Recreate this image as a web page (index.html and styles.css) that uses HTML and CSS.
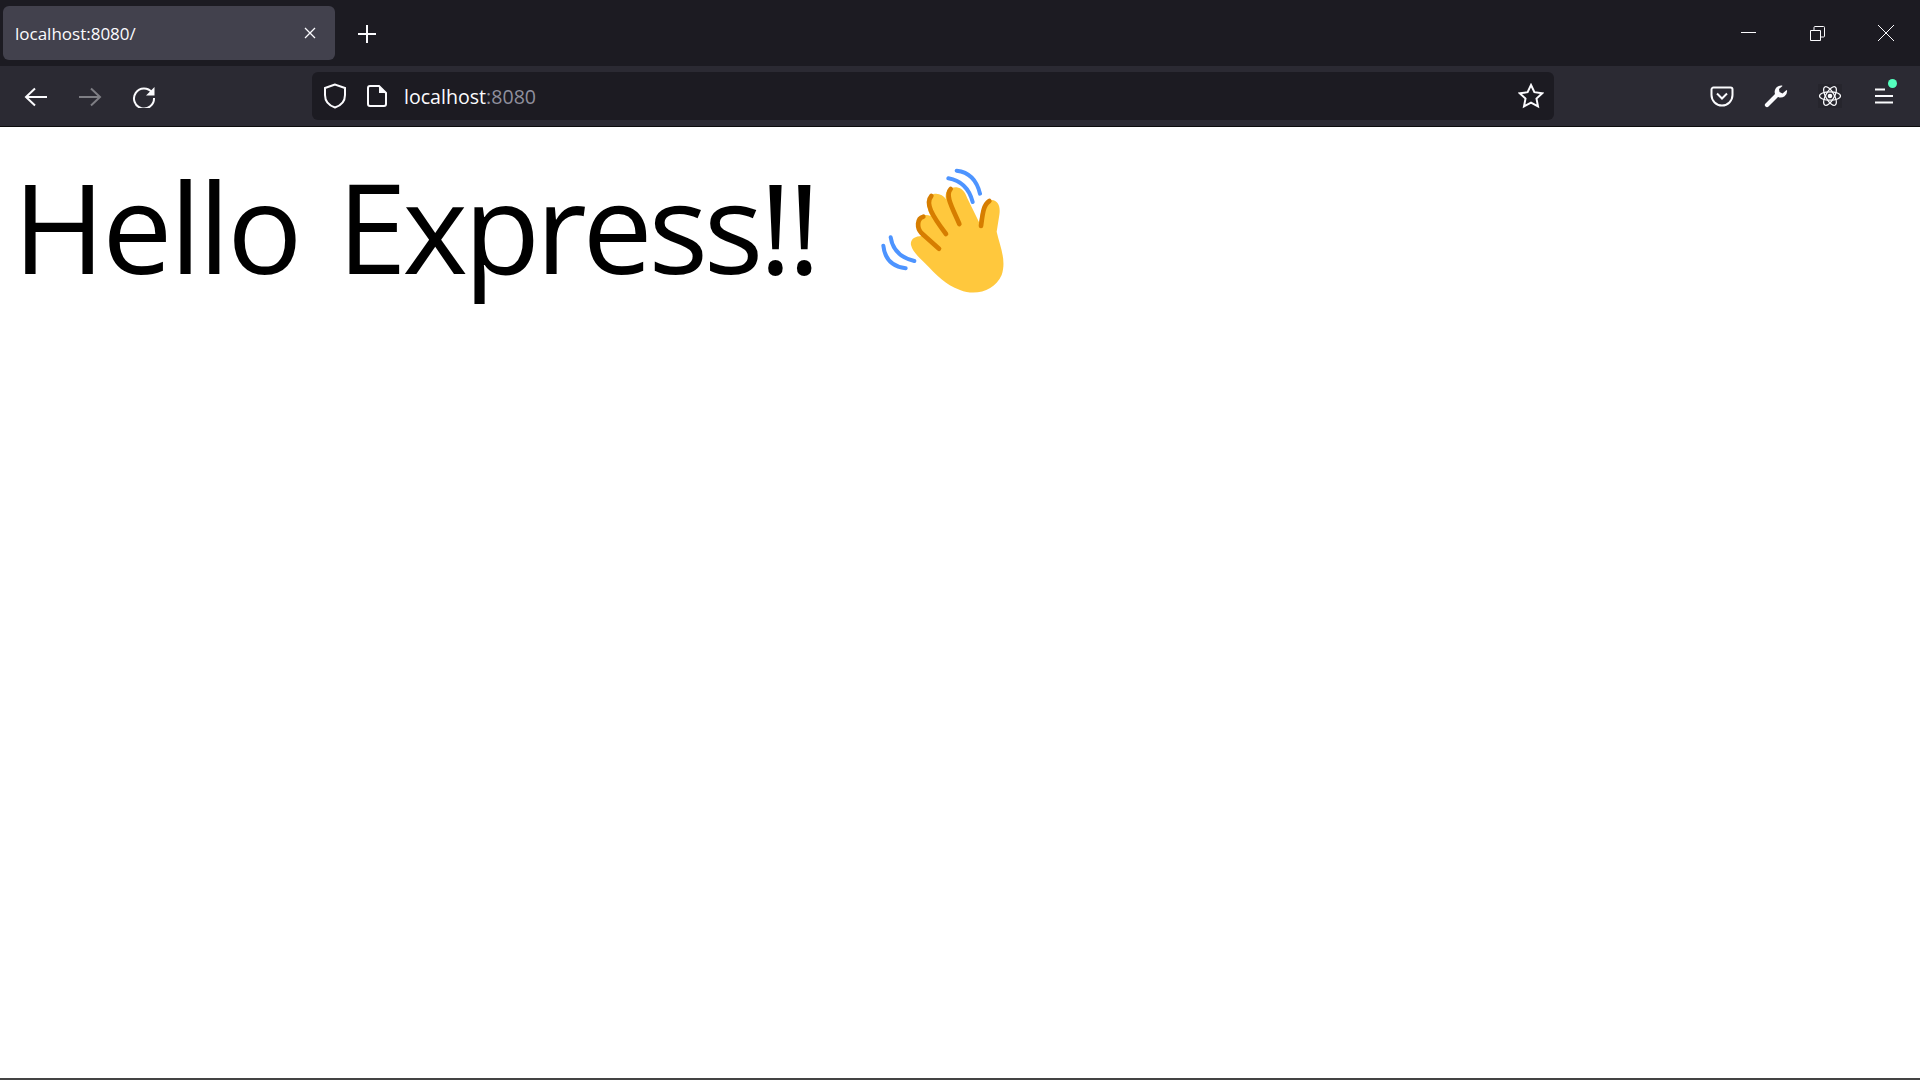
FILE: index.html
```html
<!DOCTYPE html>
<html lang="en">

<head>
  <meta charset="UTF-8" />
  <title>localhost:8080/</title>
  <link rel="stylesheet" href="styles.css">
</head>

<body>
  <div class="tabbar">
    <div class="tab">
      <span class="tab-title">localhost:8080/</span>
      <svg class="tab-close" width="12" height="12" viewBox="0 0 12 12"><path d="M1 1l10 10M11 1L1 11" /></svg>
    </div>
    <div class="newtab">
      <svg width="18" height="18" viewBox="0 0 18 18"><path d="M9 0v18M0 9h18" /></svg>
    </div>
    <div class="winctrls">
      <div class="winbtn">
        <svg width="15" height="15" viewBox="0 0 15 15"><path d="M0 6.500h15" /></svg>
      </div>
      <div class="winbtn">
        <svg width="15" height="15" viewBox="0 0 15 15"><path d="M.5 4.500h10v10H.5zM4 4.500V1.500a1 1 0 0 1 1-1h8.500a1 1 0 0 1 1 1V10a1 1 0 0 1-1 1h-3" /></svg>
      </div>
      <div class="winbtn">
        <svg width="16" height="16" viewBox="0 0 16 16"><path d="M0 0l16 16M16 0L0 16" /></svg>
      </div>
    </div>
  </div>

  <div class="navbar">
    <div class="navbtn">
      <svg width="24" height="24" viewBox="0 0 24 24"><path d="M23 13H3M11 4.500l-9 8.500 9 8.500" /></svg>
    </div>
    <div class="navbtn off">
      <svg width="24" height="24" viewBox="0 0 24 24"><path d="M1 13h20M13 4.500l9 8.500-9 8.500" /></svg>
    </div>
    <div class="navbtn">
      <svg width="24" height="24" viewBox="0 0 24 24"><path d="M20 8.500A10 10 0 1 0 22 14" /><path class="solid" d="M22.500 3v8.500H14z" /></svg>
    </div>

    <div class="urlbar">
      <svg class="shield" width="24" height="26" viewBox="0 0 24 26"><path d="M12 1.500L2 5v7c0 6 4 10.500 10 12.500 6-2 10-6.500 10-12.500V5z" /></svg>
      <svg class="page" width="20" height="22" viewBox="0 0 20 22"><path d="M3 1h9l7 7v11a2 2 0 0 1-2 2H3a2 2 0 0 1-2-2V3a2 2 0 0 1 2-2z" /><path class="solid" d="M12 1l7 7h-7z" /></svg>
      <div class="url">localhost<span class="port">:8080</span></div>
      <svg class="star" width="26" height="26" viewBox="0 0 26 26"><path d="M13 2l3.400 7.200 7.900 1-5.800 5.400 1.500 7.800L13 19.600l-7 3.800 1.500-7.800-5.800-5.400 7.900-1z" /></svg>
    </div>

    <div class="navbtn">
      <svg width="24" height="24" viewBox="0 0 24 24"><path d="M3.500 3.500h17a2 2 0 0 1 2 2V11a10.500 10.500 0 0 1-21 0V5.500a2 2 0 0 1 2-2z" /><path d="M7 9.500l5 5 5-5" /></svg>
    </div>
    <div class="navbtn">
      <svg width="24" height="24" viewBox="0 0 24 24"><path class="solid" d="M18 1.500a6.500 6.500 0 0 0-7 8.500L1.500 19.500a2 2 0 0 0 3 3L14 13a6.500 6.500 0 0 0 9-7l-1 .5-3.500 3-3-1.500-.5-3 3.500-3z" /></svg>
    </div>
    <div class="navbtn">
      <div class="react">
        <svg width="24" height="24" viewBox="0 0 24 24">
          <circle class="solid" cx="12" cy="12" r="2.300" />
          <ellipse class="thin" cx="12" cy="12" rx="10.500" ry="4.200" />
          <ellipse class="thin" cx="12" cy="12" rx="10.500" ry="4.200" transform="rotate(60 12 12)" />
          <ellipse class="thin" cx="12" cy="12" rx="10.500" ry="4.200" transform="rotate(120 12 12)" />
        </svg>
      </div>
    </div>
    <div class="navbtn">
      <div class="menu">
        <svg width="20" height="20" viewBox="0 0 20 20"><path d="M1 3.500h10M1 10h18M1 16.500h18" /></svg>
        <span class="badge"></span>
      </div>
    </div>
  </div>

  <div class="content">
    <h1 class="hello">
      <span>Hello <span class="express">Express!!</span></span>
      <svg class="wave" width="160" height="160" viewBox="0 0 480 480">
        <path class="wave-blue" d="M290 62Q345 68 360 131M265 85Q322 95 338 156M92 262Q100 318 163 333M70 287Q76 347 137 355" />
        <path class="wave-hand" d="M153 285C150 268 165 258 185 258 170 235 165 205 190 196 198 194 205 195 212 198 200 175 195 145 220 132 235 128 250 135 258 148 252 125 270 110 290 112 305 114 315 125 322 145L358 218C362 190 368 150 395 150 415 152 422 170 418 195L410 245C420 290 440 330 425 375 405 420 350 440 300 420 255 405 230 375 195 340 175 320 158 305 153 285z" />
        <path class="wave-line" d="M190 200C170 205 170 235 185 250L237 296M214 138C195 160 215 195 258 252M272 117C255 135 275 170 298 222M388 153C370 165 368 190 363 228" />
      </svg>
    </h1>
  </div>
</body>

</html>
```

FILE: styles.css
```css
* {
  margin: 0;
  padding: 0;
  box-sizing: border-box;
}

html,
body {
  height: 100%;
}

body {
  display: flex;
  flex-direction: column;
  background-color: #fff;
  font-family: "Open Sans", "Liberation Sans", sans-serif;
  overflow: hidden;
}

svg {
  display: block;
  fill: none;
  stroke: #fbfbfe;
  stroke-width: 2;
}

svg .solid {
  fill: #fbfbfe;
  stroke: none;
}

/* 标签栏 */
.tabbar {
  display: flex;
  height: 66px;
  padding: 6px 0 6px 3px;
  background-color: #1c1b22;
}

.tab {
  display: flex;
  align-items: center;
  justify-content: space-between;
  width: 332px;
  height: 54px;
  padding: 0 19px 0 12px;
  border-radius: 6px;
  background-color: #42414d;
}

.tab-title {
  padding-top: 1px;
  font-size: 17px;
  color: #fbfbfe;
}

.tab-close {
  stroke-width: 1.300;
}

.newtab {
  display: flex;
  align-items: center;
  justify-content: center;
  width: 64px;
  padding-top: 2px;
}

.winctrls {
  display: flex;
  margin-left: auto;
}

.winbtn {
  display: flex;
  align-items: center;
  justify-content: center;
  width: 69px;
}

.winbtn:last-child {
  width: 68px;
}

.winbtn svg {
  stroke-width: 1;
}

/* 地址栏 */
.navbar {
  display: flex;
  align-items: center;
  height: 61px;
  padding: 0 9px 1px;
  border-bottom: 1px solid #0c0c0d;
  background-color: #2b2a33;
}

.navbtn {
  display: flex;
  align-items: center;
  justify-content: center;
  width: 54px;
}

.navbtn.off svg {
  opacity: .4;
}

.urlbar {
  display: flex;
  align-items: center;
  flex: 1;
  height: 48px;
  margin: 0 141px;
  padding: 0 10px 0 11px;
  border-radius: 6px;
  background-color: #1c1b22;
}

.shield {
  margin-right: 20px;
}

.page {
  margin-right: 17px;
}

.url {
  flex: 1;
  padding-top: 2px;
  font-size: 19.600px;
  color: #fbfbfe;
}

.port {
  color: #8f8f9d;
}

.react {
  background-color: #26252d;
}

.react svg {
  stroke-width: 1.200;
}

.menu {
  position: relative;
}

.badge {
  position: absolute;
  top: -7px;
  right: -3px;
  width: 9px;
  height: 9px;
  border-radius: 50%;
  background-color: #54ffbd;
}

/* 内容 */
.content {
  flex: 1;
  padding: 22px 13px;
  border-bottom: 2px solid #444;
}

.hello {
  display: flex;
  align-items: flex-start;
  gap: 44px;
  font-size: 125px;
  font-weight: 400;
  line-height: 154px;
  letter-spacing: -2.800px;
  word-spacing: 8px;
  color: #000;
}

.express {
  letter-spacing: -4.300px;
}

.wave {
  margin-top: 1px;
  stroke: none;
}

.wave-blue {
  stroke: #4d94ff;
  stroke-width: 12;
  stroke-linecap: round;
}

.wave-hand {
  fill: #ffc83d;
}

.wave-line {
  stroke: #d67d00;
  stroke-width: 14;
  stroke-linecap: round;
}
```
